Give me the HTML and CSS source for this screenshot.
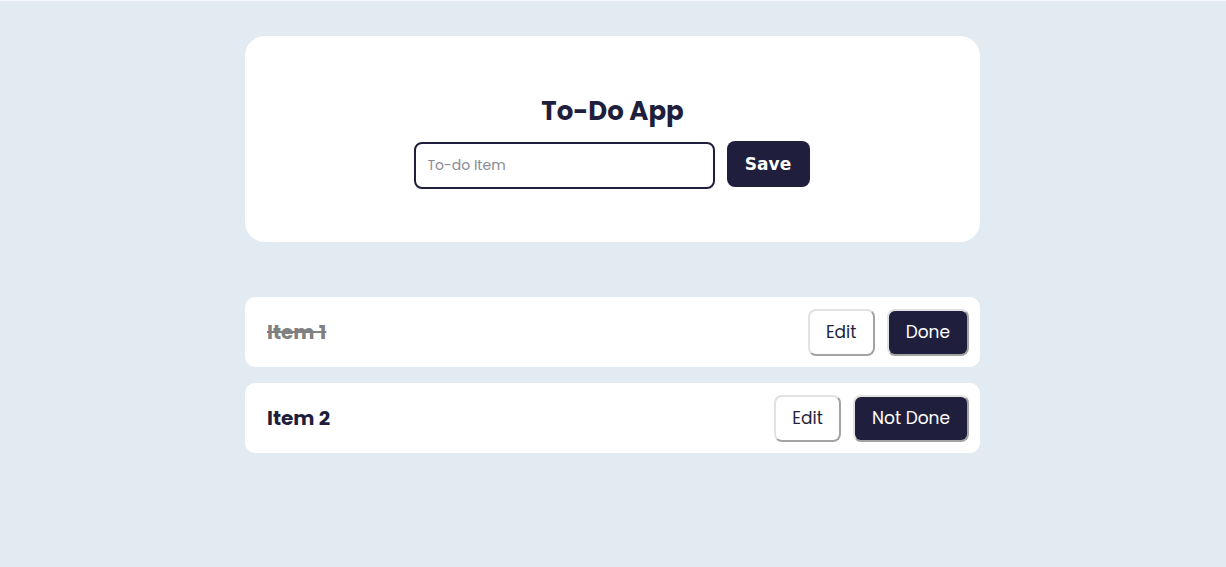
FILE: index.html
```html
<!DOCTYPE html>
<html lang="en">
<head>
<meta charset="utf-8">
<title>To-Do App</title>
<link rel="stylesheet" href="styles.css">
</head>
<body>
<main class="app">
  <section class="card">
    <h1 class="title">To-Do App</h1>
    <form class="add-form">
      <input class="todo-input" type="text" placeholder="To-do Item">
      <button class="save-btn" type="button">Save</button>
    </form>
  </section>
  <ul class="list">
    <li class="item">
      <span class="item-text done">Item 1</span>
      <div class="actions">
        <button class="btn btn-edit" type="button">Edit</button>
        <button class="btn btn-dark" type="button">Done</button>
      </div>
    </li>
    <li class="item">
      <span class="item-text">Item 2</span>
      <div class="actions">
        <button class="btn btn-edit" type="button">Edit</button>
        <button class="btn btn-dark" type="button">Not Done</button>
      </div>
    </li>
  </ul>
</main>
</body>
</html>
```
FILE: styles.css
```css
* { box-sizing: border-box; }
html, body {
  margin: 0;
  padding: 0;
  background: #e2eaf2;
  font-family: "Poppins", "Inter", "Open Sans", sans-serif;
  color: #1f1f3d;
}
body { border-top: 1px solid #f3f6fa; }
.app {
  width: 735px;
  margin: 35px 0 0 245px;
}
.card {
  background: #fff;
  border-radius: 20px;
  height: 206px;
  display: flex;
  flex-direction: column;
  align-items: center;
  padding-top: 57px;
}
.title {
  margin: 0 0 13px;
  font-size: 26px;
  font-weight: 700;
  line-height: 36px;
}
.add-form {
  display: flex;
  align-items: flex-start;
  gap: 12px;
  margin-right: 2px;
}
.todo-input {
  width: 301px;
  height: 47px;
  border: 2px solid #1f1f3d;
  border-radius: 8px;
  padding: 0 12px;
  font-family: inherit;
  font-size: 14px;
  color: #1f1f3d;
  outline: none;
}
.todo-input::placeholder { color: #8a8a94; }
.save-btn {
  width: 83px;
  height: 46px;
  margin-top: -1px;
  border: none;
  border-radius: 8px;
  background: #1f1f3d;
  color: #fff;
  font-family: "DejaVu Sans", sans-serif;
  font-weight: 700;
  font-size: 17px;
}
.list {
  list-style: none;
  margin: 55px 0 0;
  padding: 0;
  display: flex;
  flex-direction: column;
  gap: 16px;
}
.item {
  background: #fff;
  border-radius: 10px;
  height: 70px;
  display: flex;
  align-items: center;
  justify-content: space-between;
  padding: 0 11px 0 22px;
}
.item-text {
  font-size: 20px;
  font-weight: 700;
  color: #1f1f3d;
}
.item-text.done {
  color: #808080;
  text-decoration: line-through;
}
.actions {
  display: flex;
  gap: 12px;
}
.btn {
  height: 47px;
  padding: 0 16px;
  border: 2px solid;
  border-color: #e2e2e2 #a3a3a3 #a3a3a3 #e2e2e2;
  border-radius: 8px;
  font-family: inherit;
  font-size: 17px;
}
.btn-edit {
  background: #fff;
  color: #1f1f3d;
  min-width: 67px;
}
.btn-dark {
  background: #1f1f3d;
  color: #fff;
  padding: 0 17px;
}
```
